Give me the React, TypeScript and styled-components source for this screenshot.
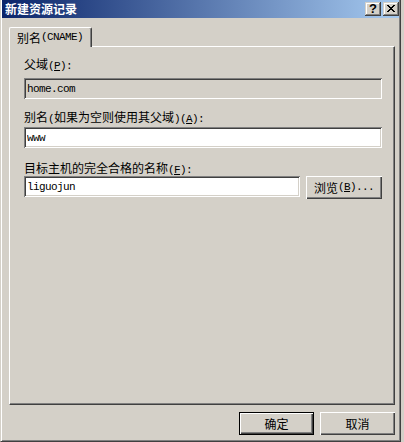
import React from 'react';
import styled, { createGlobalStyle } from 'styled-components';

const FACE = '#D4D0C8';
const HI = '#FFFFFF';
const SH = '#808080';
const DK = '#404040';

const Global = createGlobalStyle`
  html, body { margin: 0; padding: 0; background: ${FACE}; }
  body { font-family: "Noto Sans CJK SC", "Noto Sans", sans-serif; font-size: 12px; color: #000; }
  #root { width: 404px; height: 442px; overflow: hidden; }
`;

const Window = styled.div`
  box-sizing: border-box;
  width: 401px;
  height: 442px;
  background: ${FACE};
  border-left: 1px solid ${FACE};
  border-right: 1px solid ${DK};
  border-bottom: 1px solid ${DK};
  box-shadow: inset 1px 0 0 ${HI}, inset -1px -1px 0 ${SH};
  padding: 0 1px 1px 1px;
  display: flex;
  flex-direction: column;
`;

const TitleBar = styled.div`
  height: 18px;
  flex: none;
  display: flex;
  align-items: center;
  padding: 0 0 0 3px;
  background: linear-gradient(to right, #0a246a, #a6caf0);
`;

const Title = styled.div`
  flex: 1;
  color: #fff;
  font-weight: bold;
  font-size: 12px;
  line-height: 18px;
  white-space: nowrap;
`;

const CaptionButton = styled.div<{ $gapRight?: number }>`
  box-sizing: border-box;
  width: 16px;
  height: 14px;
  margin-right: ${(p) => p.$gapRight ?? 0}px;
  background: ${FACE};
  box-shadow: inset -1px -1px 0 ${DK}, inset 1px 1px 0 ${FACE}, inset -2px -2px 0 ${SH},
    inset 2px 2px 0 ${HI};
  display: flex;
  align-items: center;
  justify-content: center;
  font-family: "Liberation Sans", Arial, sans-serif;
  font-weight: bold;
  font-size: 13px;
  line-height: 12px;
  padding-bottom: 1px;
`;

const Body = styled.div`
  flex: 1;
  display: flex;
  flex-direction: column;
  padding: 9px 4px 0 7px;
`;

const TabStrip = styled.div`
  display: flex;
  height: 19px;
`;

const Tab = styled.div`
  position: relative;
  z-index: 1;
  box-sizing: border-box;
  height: 20px;
  padding: 0 8px 0 7px;
  background: ${FACE};
  border-top: 1px solid ${HI};
  border-left: 1px solid ${HI};
  border-right: 1px solid ${DK};
  box-shadow: inset -1px 0 0 ${SH};
  border-top-left-radius: 2px;
  border-top-right-radius: 2px;
  display: flex;
  align-items: center;
  line-height: 13px;
  white-space: nowrap;
`;

const Panel = styled.div`
  box-sizing: border-box;
  width: 386px;
  height: 359px;
  border: 1px solid;
  border-color: ${HI} ${DK} ${DK} ${HI};
  box-shadow: inset -1px -1px 0 ${SH};
  padding: 10px 12px 0 14px;
  display: flex;
  flex-direction: column;
`;

const Group = styled.div<{ $top: number; $gap: number }>`
  display: flex;
  flex-direction: column;
  margin-top: ${(p) => p.$top}px;
  gap: ${(p) => p.$gap}px;
`;

const Label = styled.div`
  line-height: 13px;
  height: 13px;
  white-space: nowrap;
`;

const Row = styled.div`
  display: flex;
  gap: 6px;
  align-items: flex-start;
`;

const Field = styled.input<{ $readonly?: boolean }>`
  box-sizing: border-box;
  flex: 1 1 auto;
  min-width: 0;
  height: 21px;
  margin: 0;
  padding: 1px 3px 0 3px;
  border: none;
  outline: none;
  background: ${(p) => (p.$readonly ? FACE : HI)};
  box-shadow: inset 1px 1px 0 ${SH}, inset -1px -1px 0 ${HI}, inset 2px 2px 0 ${DK},
    inset -2px -2px 0 ${FACE};
  font-family: "Liberation Mono", monospace;
  font-size: 11px;
  letter-spacing: -0.6px;
  color: #000;
`;

const Button = styled.div<{ $default?: boolean; $width?: number }>`
  box-sizing: border-box;
  flex: none;
  width: ${(p) => p.$width ?? 75}px;
  height: 23px;
  background: ${FACE};
  border: ${(p) => (p.$default ? '1px solid #000' : 'none')};
  box-shadow: inset 1px 1px 0 ${HI}, inset -1px -1px 0 ${DK}, inset -2px -2px 0 ${SH};
  display: flex;
  align-items: center;
  justify-content: center;
  line-height: 13px;
  white-space: nowrap;
  padding-bottom: 1px;
`;

const Footer = styled.div`
  display: flex;
  justify-content: flex-end;
  gap: 6px;
  margin-top: 7px;
`;

const Lat = styled.span`
  font-family: "Liberation Mono", monospace;
  font-size: 11px;
  letter-spacing: -0.6px;
`;

const Key = styled.span`
  text-decoration: underline;
  text-underline-offset: 1px;
`;

function rich(s: string): React.ReactNode[] {
  const out: React.ReactNode[] = [];
  let buf = '';
  let bufLat: boolean | null = null;
  const flush = () => {
    if (!buf) return;
    out.push(bufLat ? <Lat key={out.length}>{buf}</Lat> : <span key={out.length}>{buf}</span>);
    buf = '';
  };
  for (let i = 0; i < s.length; i++) {
    const c = s[i];
    if (c === '&' && i + 1 < s.length) {
      flush();
      const k = s[++i];
      out.push(
        <Lat key={out.length}>
          <Key>{k}</Key>
        </Lat>
      );
      bufLat = null;
      continue;
    }
    const lat = c.charCodeAt(0) < 128;
    if (bufLat !== null && lat !== bufLat) flush();
    bufLat = lat;
    buf += c;
  }
  flush();
  return out;
}

const CloseIcon = () => (
  <svg width="8" height="7" viewBox="0 0 8 7" shapeRendering="crispEdges">
    <path
      d="M0 0h2v1h-2zM1 1h2v1h-2zM2 2h4v1h-4zM3 3h2v1h-2zM2 4h4v1h-4zM1 5h2v1h-2zM0 6h2v1h-2zM6 0h2v1h-2zM5 1h2v1h-2zM5 5h2v1h-2zM6 6h2v1h-2z"
      fill="#000"
    />
  </svg>
);

export default function App() {
  return (
    <>
      <Global />
      <Window>
        <TitleBar>
          <Title>新建资源记录</Title>
          <CaptionButton $gapRight={2}>?</CaptionButton>
          <CaptionButton>
            <CloseIcon />
          </CaptionButton>
        </TitleBar>
        <Body>
          <TabStrip>
            <Tab>{rich('别名(CNAME)')}</Tab>
          </TabStrip>
          <Panel>
            <Group $top={0} $gap={8}>
              <Label>{rich('父域(&P):')}</Label>
              <Row>
                <Field $readonly readOnly defaultValue="home.com" />
              </Row>
            </Group>
            <Group $top={11} $gap={4}>
              <Label>{rich('别名(如果为空则使用其父域)(&A):')}</Label>
              <Row>
                <Field defaultValue="www" />
              </Row>
            </Group>
            <Group $top={13} $gap={2}>
              <Label>{rich('目标主机的完全合格的名称(&F):')}</Label>
              <Row>
                <Field defaultValue="liguojun" />
                <Button $width={76}>{rich('浏览(&B)...')}</Button>
              </Row>
            </Group>
          </Panel>
          <Footer>
            <Button $default>确定</Button>
            <Button>取消</Button>
          </Footer>
        </Body>
      </Window>
    </>
  );
}
